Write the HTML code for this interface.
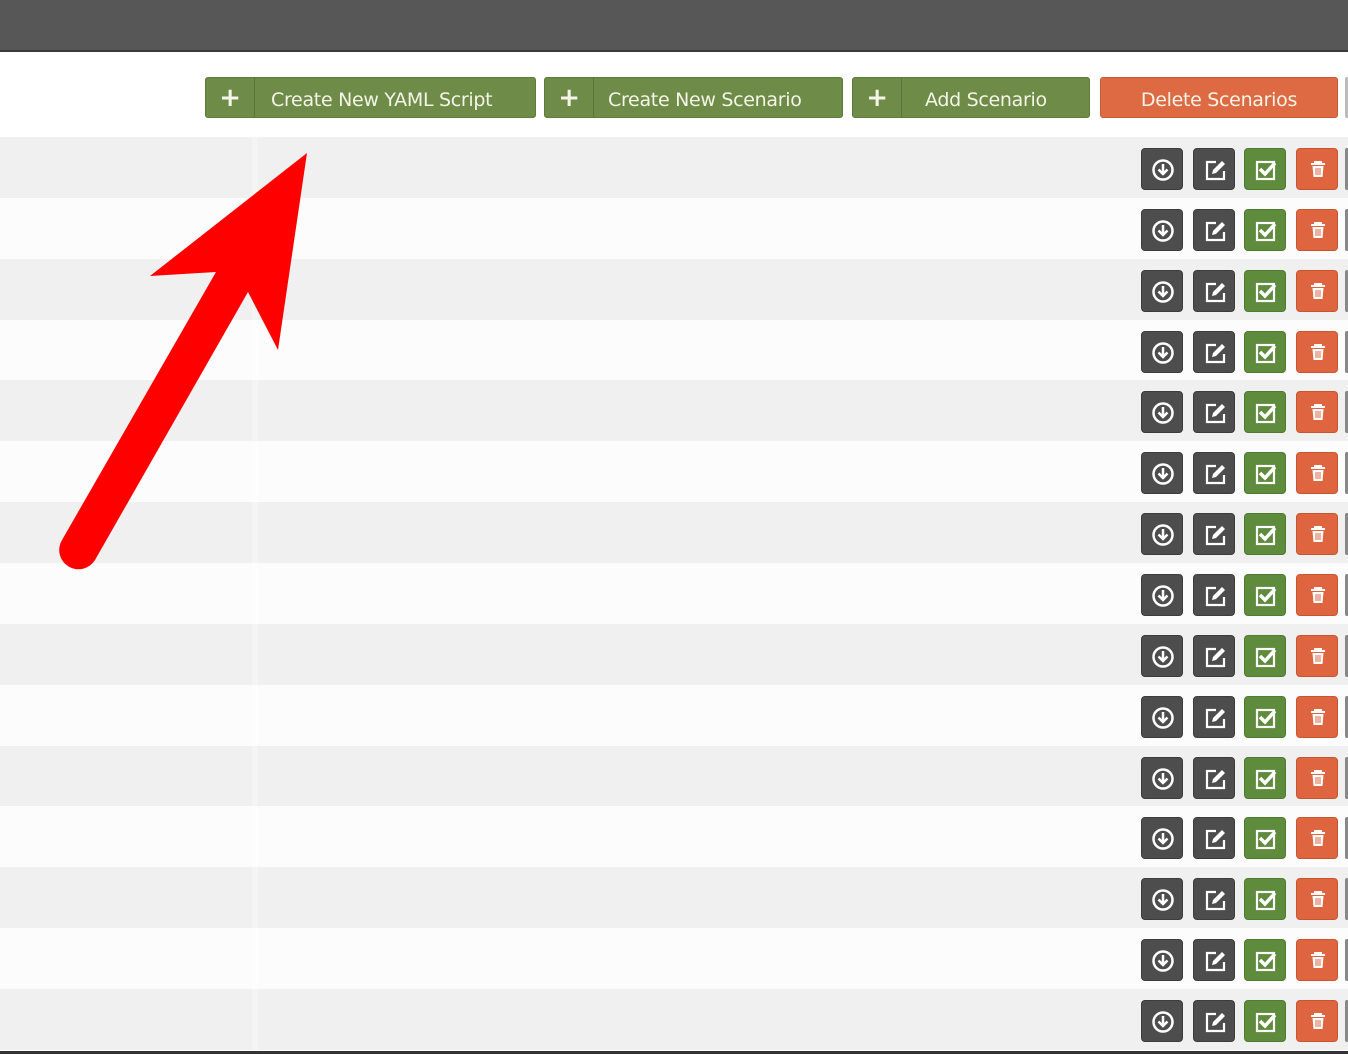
<!DOCTYPE html>
<html><head><meta charset="utf-8"><style>
*{margin:0;padding:0;box-sizing:border-box}
body{width:1348px;height:1054px;overflow:hidden;background:#fff;font-family:"DejaVu Sans","Liberation Sans",sans-serif;position:relative}
.top{position:absolute;left:0;top:0;width:1348px;height:52px;background:#575757;border-bottom:2px solid #3a3a3a}
.btn{position:absolute;top:77px;height:41px;border-radius:3px;color:#f4f4e8;font-size:19px;line-height:45px;border:1px solid #5e7a3c;letter-spacing:-0.3px}
.g{background:#6e8b48}
.o{background:#dd6a42;border-color:#c95a35;text-align:center}
.plus{position:absolute;left:0;top:0;width:49px;height:39px;border-right:1px solid #5a7538;text-align:center;font-size:26px;line-height:40px;font-weight:bold}
.lbl{position:absolute;top:0}
.row{position:absolute;left:0;width:1348px;height:61px}
.row .sep{position:absolute;left:252px;top:0;width:6px;height:61px;background:rgba(255,255,255,.3)}
.ic{position:absolute;width:42px;height:42px;border-radius:4px}
.dk{background:#4d4d4d;border:1px solid #3c3c3c}
.gr{background:#5f8b3d;border:1px solid #4f7a30}
.rd{background:#de6540;border:1px solid #c9552f}
.ic svg{position:absolute;left:0;top:0}
.stub{position:absolute;left:1345px;width:3px;height:42px;background:#888;border-radius:2px 0 0 2px}
.bot{position:absolute;left:0;top:1051px;width:1348px;height:3px;background:#333}
</style></head><body>
<div class="top"></div>
<div class="btn g" style="left:205px;width:331px"><div class="plus">+</div><div class="lbl" style="left:65px">Create New YAML Script</div></div>
<div class="btn g" style="left:544px;width:299px"><div class="plus">+</div><div class="lbl" style="left:63px">Create New Scenario</div></div>
<div class="btn g" style="left:852px;width:238px"><div class="plus">+</div><div class="lbl" style="left:72px">Add Scenario</div></div>
<div class="btn o" style="left:1100px;width:238px">Delete Scenarios</div>
<div id="rows"></div>
<script>
var h='';
var dl='<svg width="42" height="42"><circle cx="21" cy="21" r="9.5" fill="none" stroke="#fff" stroke-width="2.5"/><path d="M21 15v10M16.5 20.5l4.5 4.5 4.5-4.5" fill="none" stroke="#fff" stroke-width="2.5"/></svg>';
var ed='<svg width="42" height="42"><path d="M22 13h-9v17h17v-8" fill="none" stroke="#fff" stroke-width="2.2"/><path d="M18 25l1-4 9-9 3 3-9 9z" fill="#fff"/></svg>';
var ck='<svg width="42" height="42"><rect x="12" y="13" width="17" height="17" fill="none" stroke="#fff" stroke-width="2.2"/><path d="M15 20l5 5 10-11" fill="none" stroke="#fff" stroke-width="3.5"/></svg>';
var tr='<svg width="42" height="42"><path d="M14 15h14M18 15v-2h6v2" fill="none" stroke="#fff" stroke-width="2"/><path d="M15.5 17h11l-1 11h-9z" fill="#fff"/><path d="M19 19v7M21 19v7M23 19v7" stroke="#de6540" stroke-width="1"/></svg>';
for(var i=0;i<15;i++){var t=Math.round(137+i*60.86);
h+='<div class="row" style="top:'+t+'px;background:'+(i%2?'#fcfcfc':'#f0f0f0')+'"><div class="sep"></div></div>';
var it=t+11;
h+='<div class="ic dk" style="left:1141px;top:'+it+'px">'+dl+'</div>';
h+='<div class="ic dk" style="left:1193px;top:'+it+'px">'+ed+'</div>';
h+='<div class="ic gr" style="left:1244px;top:'+it+'px">'+ck+'</div>';
h+='<div class="ic rd" style="left:1296px;top:'+it+'px">'+tr+'</div>';
h+='<div class="stub" style="top:'+it+'px"></div>';}
document.getElementById('rows').innerHTML=h;
</script>
<div class="stub" style="top:77px;height:41px;background:#bbb"></div>
<svg style="position:absolute;left:0;top:0" width="1348" height="1054"><path d="M307 153 L278 350 L248 292 L95 560 A19 19 0 0 1 62 540 L216 272 L150 276 Z" fill="#ff0000"/></svg>
<div class="bot"></div>
</body></html>
